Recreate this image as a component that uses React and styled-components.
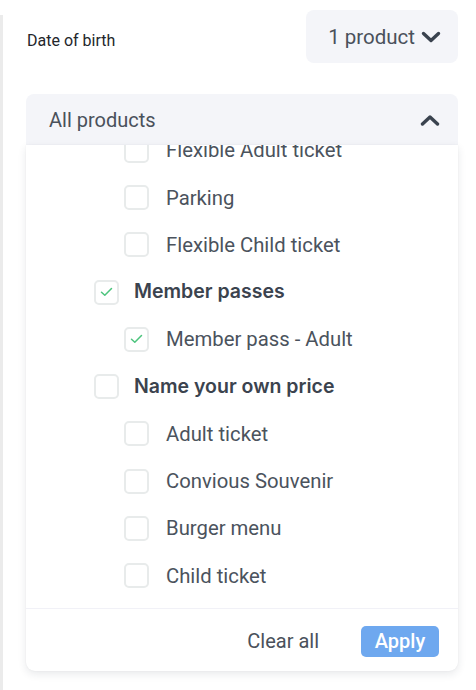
import { useLayoutEffect, useRef } from "react";
import styled, { createGlobalStyle } from "styled-components";

const GlobalStyle = createGlobalStyle`
  body {
    margin: 0;
    background: #ffffff;
    font-family: Roboto, "Liberation Sans", sans-serif;
  }
`;

const groups = [
  {
    name: "Day tickets",
    checked: false,
    items: [
      { name: "Adult ticket" },
      { name: "Child ticket" },
      { name: "Flexible Adult ticket" },
      { name: "Parking" },
      { name: "Flexible Child ticket" },
    ],
  },
  {
    name: "Member passes",
    checked: true,
    items: [{ name: "Member pass - Adult", checked: true }],
  },
  {
    name: "Name your own price",
    checked: false,
    items: [
      { name: "Adult ticket" },
      { name: "Convious Souvenir" },
      { name: "Burger menu" },
      { name: "Child ticket" },
    ],
  },
];

function Chevron({ up }) {
  return (
    <svg width="20" height="12" viewBox="0 0 20 12" fill="none">
      <polyline
        points={up ? "2.5,10 10,3 17.5,10" : "2.5,2.5 10,9.5 17.5,2.5"}
        stroke="#3a434f"
        strokeWidth="3.4"
        strokeLinecap="round"
        strokeLinejoin="round"
      />
    </svg>
  );
}

function Checkbox({ checked }) {
  return (
    <Box>
      {checked && (
        <svg width="13" height="10" viewBox="0 0 13 10" fill="none">
          <polyline
            points="1.5,5.2 4.8,8.3 11.5,1.5"
            stroke="#4cc47d"
            strokeWidth="1.5"
            strokeLinecap="round"
            strokeLinejoin="round"
          />
        </svg>
      )}
    </Box>
  );
}

export default function App() {
  const listRef = useRef(null);

  useLayoutEffect(() => {
    if (listRef.current) listRef.current.scrollTop = 9999;
  }, []);

  return (
    <Page>
      <GlobalStyle />
      <Rail />
      <Content>
        <Header>
          <FieldLabel>Date of birth</FieldLabel>
          <SelectButton>
            1 product
            <Chevron />
          </SelectButton>
        </Header>

        <Dropdown>
          <DropdownToggle>
            All products
            <Chevron up />
          </DropdownToggle>
          <Panel>
            <List ref={listRef}>
              {groups.map((group) => (
                <div key={group.name}>
                  <Row level={0}>
                    <Checkbox checked={group.checked} />
                    <RowLabel bold>{group.name}</RowLabel>
                  </Row>
                  {group.items.map((item, i) => (
                    <Row key={i} level={1}>
                      <Checkbox checked={item.checked} />
                      <RowLabel>{item.name}</RowLabel>
                    </Row>
                  ))}
                </div>
              ))}
            </List>
            <Footer>
              <TextButton>Clear all</TextButton>
              <ApplyButton>Apply</ApplyButton>
            </Footer>
          </Panel>
        </Dropdown>
      </Content>
    </Page>
  );
}

const Page = styled.div`
  display: flex;
  min-height: 690px;
`;

const Rail = styled.div`
  width: 3px;
  margin-top: 15px;
  background: #ebebeb;
  flex-shrink: 0;
`;

const Content = styled.div`
  flex: 1;
  padding: 10px 18px 0 23px;
  display: flex;
  flex-direction: column;
  gap: 31px;
`;

const Header = styled.div`
  display: flex;
  align-items: center;
  justify-content: space-between;
  height: 53px;
`;

const FieldLabel = styled.span`
  font-size: 16px;
  color: #23262b;
  margin-top: 7px;
  padding-left: 1px;
`;

const SelectButton = styled.button`
  height: 53px;
  display: flex;
  align-items: center;
  gap: 6px;
  padding: 0 17px 0 22px;
  border: none;
  border-radius: 8px;
  background: #f4f5f9;
  font-family: inherit;
  font-size: 20.5px;
  color: #4a515b;

  svg {
    margin-top: 1px;
  }
`;

const Dropdown = styled.div`
  display: flex;
  flex-direction: column;
`;

const DropdownToggle = styled.div`
  height: 51px;
  display: flex;
  align-items: center;
  justify-content: space-between;
  padding: 0 18px 0 23px;
  border-radius: 8px 8px 0 0;
  background: #f4f5f9;
  font-size: 20px;
  color: #4a515b;
`;

const Panel = styled.div`
  background: #ffffff;
  border-radius: 0 0 9px 9px;
  box-shadow: 0 3px 8px rgba(30, 40, 60, 0.1), 0 0 2px rgba(30, 40, 60, 0.05);
  display: flex;
  flex-direction: column;
`;

const List = styled.div`
  height: 463px;
  overflow-y: auto;
  scrollbar-width: none;
  padding: 6px 0 9px;
  box-sizing: border-box;

  &::-webkit-scrollbar {
    display: none;
  }
`;

const Row = styled.div`
  height: 47.25px;
  display: flex;
  align-items: center;
  gap: 17px;
  padding-left: ${({ level }) => (level ? 98 : 68)}px;
`;

const Box = styled.span`
  width: 25px;
  height: 25px;
  box-sizing: border-box;
  border: 2px solid #e8ebeb;
  border-radius: 5px;
  display: flex;
  align-items: center;
  justify-content: center;
  flex-shrink: 0;
`;

const RowLabel = styled.span`
  font-family: ${({ bold }) =>
    bold ? `Inter, Roboto, sans-serif` : `Roboto, "Liberation Sans", sans-serif`};
  font-size: ${({ bold }) => (bold ? 19.5 : 20.3)}px;
  font-weight: ${({ bold }) => (bold ? 600 : 400)};
  color: ${({ bold }) => (bold ? "#3b434e" : "#4b535d")};
  margin: ${({ bold }) => (bold ? "-2px 0 0 -2px" : "0")};
`;

const Footer = styled.div`
  height: 63px;
  border-top: 1px solid #f1f1f7;
  box-sizing: border-box;
  display: flex;
  align-items: center;
  justify-content: flex-end;
  gap: 42px;
  padding: 2px 19px 0 0;
`;

const TextButton = styled.button`
  border: none;
  background: none;
  padding: 0;
  font-family: inherit;
  font-size: 20px;
  color: #4a515b;
`;

const ApplyButton = styled.button`
  width: 78px;
  height: 31px;
  border: none;
  border-radius: 5px;
  background: #6ea8ef;
  color: #ffffff;
  font-family: inherit;
  font-size: 20px;
  font-weight: 500;
  padding: 0;
`;
